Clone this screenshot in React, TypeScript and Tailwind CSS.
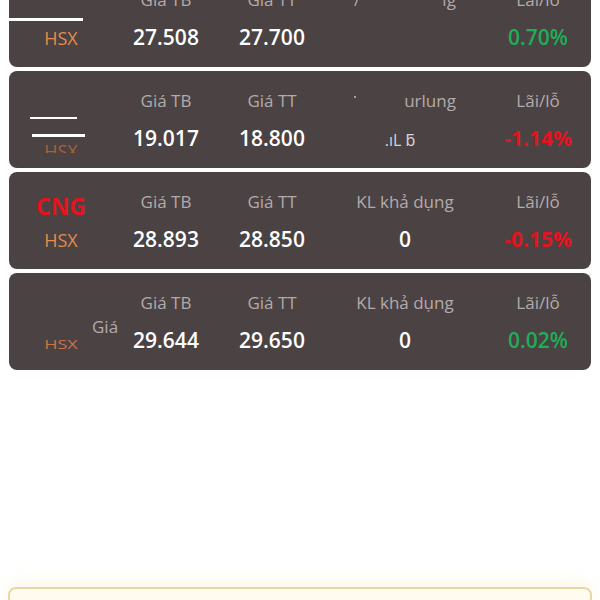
import React from "react";

const FONT = { fontFamily: '"Open Sans", "Noto Sans", sans-serif' };

type Row = {
  sym?: string;
  tb: string;
  tt: string;
  kl?: React.ReactNode;
  klLabel?: React.ReactNode;
  pl: string;
  up: boolean;
};

function Label({ children }: { children: React.ReactNode }) {
  return <div className="text-[17px] leading-[24px] text-[#b3abab]">{children}</div>;
}

function Card({
  row,
  overlay,
  hsx,
}: {
  row: Row;
  overlay?: React.ReactNode;
  hsx?: React.ReactNode;
}) {
  return (
    <div className="relative h-[97px] shrink-0 rounded-[8px] bg-[#4a4243] overflow-hidden">
      <div className="grid grid-cols-[104px_106px_106px_160px_106px] h-full pt-[18px]">
        <div className="flex flex-col items-center">
          <div className="h-[32px] text-[23px] leading-[32px] font-bold text-[#e3141f]">
            {row.sym ?? ""}
          </div>
          <div className="mt-[4px]">
            {hsx ?? <div className="text-[18px] leading-[28px] text-[#e58c4b]">HSX</div>}
          </div>
        </div>
        <div className="flex flex-col items-center">
          <Label>Giá TB</Label>
          <div className="mt-[11px] text-[21px] leading-[28px] font-semibold text-white">{row.tb}</div>
        </div>
        <div className="flex flex-col items-center">
          <Label>Giá TT</Label>
          <div className="mt-[11px] text-[21px] leading-[28px] font-semibold text-white">{row.tt}</div>
        </div>
        <div className="flex flex-col items-center">
          <Label>{row.klLabel ?? "KL khả dụng"}</Label>
          <div className="mt-[11px] text-[21px] leading-[28px] font-semibold text-white">{row.kl ?? "0"}</div>
        </div>
        <div className="flex flex-col items-center">
          <Label>Lãi/lỗ</Label>
          {row.up ? (
            <div className="mt-[11px] text-[21px] leading-[28px] font-semibold text-[#1fae57]">{row.pl}</div>
          ) : (
            <div className="mt-[11px] text-[21px] leading-[28px] font-bold text-[#e3141f]">{row.pl}</div>
          )}
        </div>
      </div>
      {overlay}
    </div>
  );
}

export default function App() {
  return (
    <div className="h-[600px] w-[600px] overflow-hidden bg-white flex flex-col" style={FONT}>
      <div className="-mt-[30px] px-[9px] flex flex-col gap-[4px]">
        <Card
          row={{
            sym: "",
            tb: "27.508",
            tt: "27.700",
            kl: "",
            klLabel: (
              <span className="flex gap-[82px]">
                <span>/</span>
                <span>ig</span>
              </span>
            ),
            pl: "0.70%",
            up: true,
          }}
          overlay={
            <div className="absolute left-0 top-[48px] h-[3px] w-[74px] bg-white" />
          }
        />
        <Card
          row={{
            tb: "19.017",
            tt: "18.800",
            klLabel: <span className="pl-[50px]">urlung</span>,
            kl: <span className="text-[16px] font-normal text-[#d8d2d2] pr-[10px]">.ıL ƃ</span>,
            pl: "-1.14%",
            up: false,
          }}
          hsx={
            <div className="h-[28px] overflow-hidden">
              <div className="text-[18px] leading-[28px] text-[#a86238] mt-[12px]">HSX</div>
            </div>
          }
          overlay={
            <>
              <div className="absolute left-[21px] top-[46px] h-[2px] w-[47px] bg-white" />
              <div className="absolute left-[23px] top-[63px] h-[3px] w-[53px] bg-white" />
              <div className="absolute left-[345px] top-[25px] h-[2px] w-[2px] rounded-full bg-[#c8c0c0]" />
            </>
          }
        />
        <Card
          row={{ sym: "CNG", tb: "28.893", tt: "28.850", pl: "-0.15%", up: false }}
        />
        <Card
          row={{ sym: "", tb: "29.644", tt: "29.650", pl: "0.02%", up: true }}
          hsx={
            <div className="h-[28px] overflow-hidden">
              <div className="text-[18px] leading-[28px] text-[#c7764a] mt-[3px] scale-y-75">HSX</div>
            </div>
          }
          overlay={
            <div className="absolute left-[83px] top-[42px] text-[17px] leading-[24px] text-[#b3abab]">
              Giá
            </div>
          }
        />
      </div>
      <div className="mt-[217px] mx-[8px] h-[40px] shrink-0 rounded-[8px] border-2 border-[#e4d8a8] bg-[#fffcef] shadow-[0_-6px_14px_rgba(240,215,130,0.18)]" />
    </div>
  );
}
